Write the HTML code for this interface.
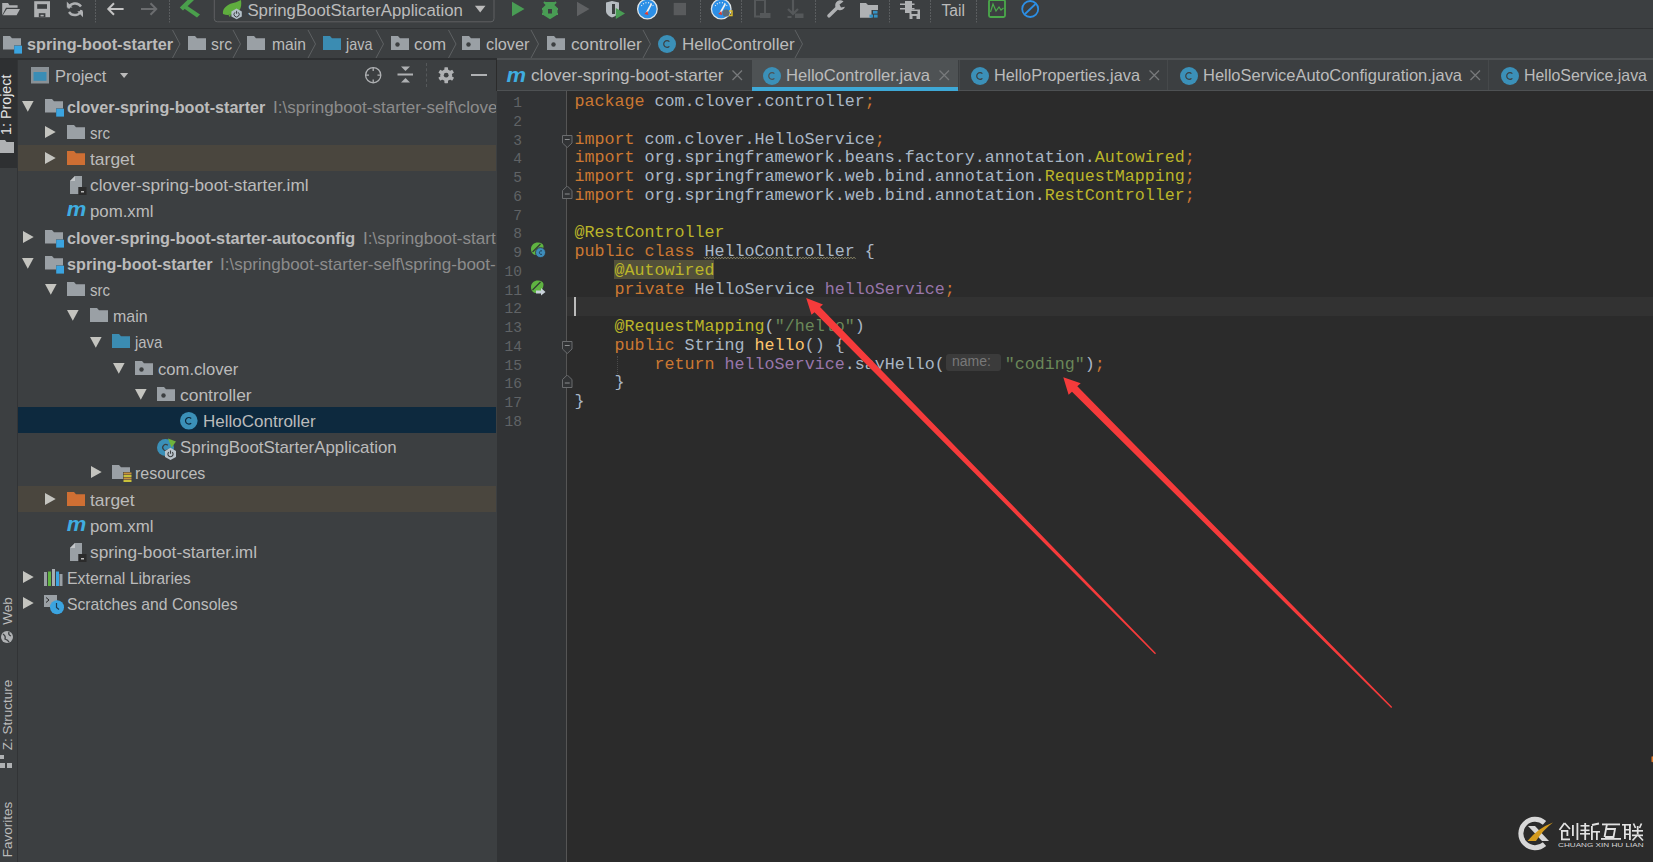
<!DOCTYPE html>
<html><head><meta charset="utf-8">
<style>
*{margin:0;padding:0;box-sizing:border-box}
html,body{width:1653px;height:862px;overflow:hidden;background:#3c3f41;font-family:"Liberation Sans",sans-serif;color:#bbbbbb}
.a{position:absolute}
#toolbar{left:0;top:0;width:1653px;height:28px;background:#3c3f41}
#tbline{left:0;top:28px;width:1653px;height:1px;background:#2f3133}
#crumbs{left:0;top:29px;width:1653px;height:29px;background:#3c3f41}
#crline{left:0;top:58px;width:497px;height:2px;background:#2d2f31}
#crline2{left:497px;top:58px;width:1156px;height:2px;background:#4e5153}
#strip{left:0;top:59px;width:17px;height:803px;background:#3c3f41}
#stripline{left:17px;top:59px;width:1px;height:803px;background:#323436}
#projbtn{left:0;top:59px;width:17px;height:109px;background:#2e3032}
#proj{left:18px;top:59px;width:478px;height:803px;background:#3c3f41;overflow:hidden}
#projline{left:496px;top:59px;width:1px;height:32px;background:#2b2b2b}
#editor{left:497px;top:59px;width:1156px;height:803px;background:#2b2b2b}
#tabs{left:497px;top:59px;width:1156px;height:31px;background:#3c3f41}
#tabline{left:497px;top:89.5px;width:1156px;height:1px;background:#4e5153}
#gutter{left:497px;top:91px;width:70px;height:771px;background:#313335}
#gutline{left:566px;top:91px;width:1px;height:771px;background:#555555}
.t{position:absolute;white-space:pre;font-size:16.5px;line-height:20px}
.code{position:absolute;left:574.5px;white-space:pre;font-family:"Liberation Mono",monospace;font-size:16.68px;line-height:18.76px;color:#a9b7c6}
.ln{position:absolute;left:497px;width:25px;text-align:right;font-family:"Liberation Mono",monospace;font-size:14.5px;line-height:18.76px;color:#606366}
.k{color:#cc7832}.an{color:#bbb529}.s{color:#6a8759}.f{color:#9876aa}.m{color:#ffc66d}
.row{position:absolute;left:18px;width:478px;height:26.2px}
.tt{position:absolute;white-space:pre;font-size:16.5px;line-height:26.2px;top:0;color:#bbbbbb}
.gp{color:#8c8c8c}
.tri{position:absolute;top:0;width:12px;height:26.2px}
.ico{position:absolute;top:4px;width:20px;height:18px}
</style></head><body>
<div id="toolbar" class="a"></div>
<div id="tbline" class="a"></div>
<div id="crumbs" class="a"></div>
<div id="strip" class="a"></div>
<div id="projbtn" class="a"></div>
<div id="stripline" class="a"></div>
<div id="proj" class="a"></div>
<div id="projline" class="a"></div>
<div class="a" style="left:0;top:0;width:496px;height:862px;overflow:hidden">
<svg class="a" style="left:22.2px;top:100.8px" width="12" height="11" viewBox="0 0 12 11" ><path d="M0 0H11.6L5.8 10.7Z" fill="#c4c4bf"/></svg>
<svg class="a" style="left:44.9px;top:98.5px" width="20" height="18" viewBox="0 0 20 18" ><path d="M0 0H7L9 2.3H18V9.5H11V13.5H0Z" fill="#9aa0a5"/><rect x="11.2" y="9.7" width="7.8" height="7.9" fill="#3ba4e0"/></svg>
<div class="tt" style="left:67.4px;top:94.5px;font-size:17px;font-weight:bold;transform:scaleX(0.9499);transform-origin:0 0">clover-spring-boot-starter</div>
<div class="tt gp" style="left:272.5px;top:94.5px;font-size:17px;transform:scaleX(1.003);transform-origin:0 0">I:\springboot-starter-self\clover-spring-boot-starter</div>
<svg class="a" style="left:45.4px;top:125.8px" width="11" height="12" viewBox="0 0 11 12" ><path d="M0 0L10.7 6L0 12Z" fill="#c4c4bf"/></svg>
<svg class="a" style="left:67.0px;top:124.7px" width="18" height="14" viewBox="0 0 18 14" ><path d="M0 0H7L9 2.2H18V14H0Z" fill="#9aa0a5"/></svg>
<div class="tt" style="left:90.0px;top:120.7px;font-size:17px;transform:scaleX(0.8846);transform-origin:0 0">src</div>
<div class="a" style="left:18px;top:145.0px;width:478px;height:26.2px;background:#4a463e"></div>
<svg class="a" style="left:45.4px;top:152.0px" width="11" height="12" viewBox="0 0 11 12" ><path d="M0 0L10.7 6L0 12Z" fill="#c4c4bf"/></svg>
<svg class="a" style="left:67.0px;top:150.9px" width="18" height="14" viewBox="0 0 18 14" ><path d="M0 0H7L9 2.2H18V14H0Z" fill="#cf6f33"/></svg>
<div class="tt" style="left:90.0px;top:146.9px;font-size:17px;transform:scaleX(1.0271);transform-origin:0 0">target</div>
<svg class="a" style="left:69.8px;top:176.0px" width="17" height="19" viewBox="0 0 17 19" ><path d="M5 0H12V11H8.5V18H0V5Z" fill="#9aa0a5"/><path d="M0 5L5 0V5Z" fill="#c3c6c9"/><rect x="8.5" y="11" width="8" height="8" fill="#2b2b2b"/><rect x="11" y="15" width="3" height="1.5" fill="#bbbbbb"/></svg>
<div class="tt" style="left:90.0px;top:173.1px;font-size:17px;transform:scaleX(1.0149);transform-origin:0 0">clover-spring-boot-starter.iml</div>
<div class="a" style="left:66.7px;top:198.4px;font-family:'Liberation Sans',sans-serif;font-style:italic;font-size:22px;line-height:22px;color:#3fade0;font-weight:bold;transform:scaleY(0.95)">m</div>
<div class="tt" style="left:90.0px;top:199.3px;font-size:17px;transform:scaleX(0.9882);transform-origin:0 0">pom.xml</div>
<svg class="a" style="left:22.8px;top:230.6px" width="11" height="12" viewBox="0 0 11 12" ><path d="M0 0L10.7 6L0 12Z" fill="#c4c4bf"/></svg>
<svg class="a" style="left:44.9px;top:229.5px" width="20" height="18" viewBox="0 0 20 18" ><path d="M0 0H7L9 2.3H18V9.5H11V13.5H0Z" fill="#9aa0a5"/><rect x="11.2" y="9.7" width="7.8" height="7.9" fill="#3ba4e0"/></svg>
<div class="tt" style="left:67.4px;top:225.5px;font-size:17px;font-weight:bold;transform:scaleX(0.9567);transform-origin:0 0">clover-spring-boot-starter-autoconfig</div>
<div class="tt gp" style="left:362.8px;top:225.5px;font-size:17px;transform:scaleX(1.003);transform-origin:0 0">I:\springboot-starter-self\clover-spring-boot-starter-autoconfig</div>
<svg class="a" style="left:22.2px;top:258.0px" width="12" height="11" viewBox="0 0 12 11" ><path d="M0 0H11.6L5.8 10.7Z" fill="#c4c4bf"/></svg>
<svg class="a" style="left:44.9px;top:255.7px" width="20" height="18" viewBox="0 0 20 18" ><path d="M0 0H7L9 2.3H18V9.5H11V13.5H0Z" fill="#9aa0a5"/><rect x="11.2" y="9.7" width="7.8" height="7.9" fill="#3ba4e0"/></svg>
<div class="tt" style="left:67.4px;top:251.7px;font-size:17px;font-weight:bold;transform:scaleX(0.9516);transform-origin:0 0">spring-boot-starter</div>
<div class="tt gp" style="left:220px;top:251.7px;font-size:17px;transform:scaleX(1.003);transform-origin:0 0">I:\springboot-starter-self\spring-boot-starter</div>
<svg class="a" style="left:44.8px;top:284.2px" width="12" height="11" viewBox="0 0 12 11" ><path d="M0 0H11.6L5.8 10.7Z" fill="#c4c4bf"/></svg>
<svg class="a" style="left:67.0px;top:281.9px" width="18" height="14" viewBox="0 0 18 14" ><path d="M0 0H7L9 2.2H18V14H0Z" fill="#9aa0a5"/></svg>
<div class="tt" style="left:90.0px;top:277.9px;font-size:17px;transform:scaleX(0.8846);transform-origin:0 0">src</div>
<svg class="a" style="left:67.4px;top:310.4px" width="12" height="11" viewBox="0 0 12 11" ><path d="M0 0H11.6L5.8 10.7Z" fill="#c4c4bf"/></svg>
<svg class="a" style="left:89.6px;top:308.1px" width="18" height="14" viewBox="0 0 18 14" ><path d="M0 0H7L9 2.2H18V14H0Z" fill="#9aa0a5"/></svg>
<div class="tt" style="left:112.6px;top:304.1px;font-size:17px;transform:scaleX(0.9379);transform-origin:0 0">main</div>
<svg class="a" style="left:90.0px;top:336.6px" width="12" height="11" viewBox="0 0 12 11" ><path d="M0 0H11.6L5.8 10.7Z" fill="#c4c4bf"/></svg>
<svg class="a" style="left:112.2px;top:334.3px" width="18" height="14" viewBox="0 0 18 14" ><path d="M0 0H7L9 2.2H18V14H0Z" fill="#3b8cb2"/></svg>
<div class="tt" style="left:135.2px;top:330.3px;font-size:17px;transform:scaleX(0.8745);transform-origin:0 0">java</div>
<svg class="a" style="left:112.6px;top:362.8px" width="12" height="11" viewBox="0 0 12 11" ><path d="M0 0H11.6L5.8 10.7Z" fill="#c4c4bf"/></svg>
<svg class="a" style="left:134.8px;top:360.5px" width="18" height="14" viewBox="0 0 18 14" ><path d="M0 0H7L9 2.2H18V14H0Z" fill="#9aa0a5"/><circle cx="6.5" cy="8.5" r="2.2" fill="#3c3f41"/></svg>
<div class="tt" style="left:157.8px;top:356.5px;font-size:17px;transform:scaleX(0.9780);transform-origin:0 0">com.clover</div>
<svg class="a" style="left:135.2px;top:389.0px" width="12" height="11" viewBox="0 0 12 11" ><path d="M0 0H11.6L5.8 10.7Z" fill="#c4c4bf"/></svg>
<svg class="a" style="left:157.4px;top:386.7px" width="18" height="14" viewBox="0 0 18 14" ><path d="M0 0H7L9 2.2H18V14H0Z" fill="#9aa0a5"/><circle cx="6.5" cy="8.5" r="2.2" fill="#3c3f41"/></svg>
<div class="tt" style="left:180.4px;top:382.7px;font-size:17px;transform:scaleX(1.0248);transform-origin:0 0">controller</div>
<div class="a" style="left:18px;top:407.0px;width:478px;height:26.2px;background:#0d293e"></div>
<svg class="a" style="left:180.2px;top:412.0px" width="17.6" height="17.6" viewBox="0 0 17.6 17.6" ><circle cx="8.8" cy="8.8" r="8.8" fill="#3b90b8"/><path d="M11.200000000000001 6.500000000000001A3.3 3.3 0 1 0 11.200000000000001 11.100000000000001" stroke="#0d293e" stroke-width="1.2" fill="none"/></svg>
<div class="tt" style="left:203.0px;top:408.9px;font-size:17px;transform:scaleX(1.0012);transform-origin:0 0">HelloController</div>
<svg class="a" style="left:157.4px;top:437.7px" width="20" height="22" viewBox="0 0 20 22" ><circle cx="8.5" cy="9.5" r="8.5" fill="#3b90b8"/><path d="M10.8 7.3A3 3 0 1 0 10.8 11.7" stroke="#3c3f41" stroke-width="1.3" fill="none"/><path d="M11 0.5L19 3.5L14.5 9.5Z" fill="#6fb33b"/><polygon points="13.5,9.8 19,12.9 19,18.9 13.5,22 8,18.9 8,12.9" fill="#b9c3ca"/><path d="M11.8 14.2A2.6 2.6 0 1 0 15.2 14.2M13.5 12.6V15.8" stroke="#3c3f41" stroke-width="1.1" fill="none"/></svg>
<div class="tt" style="left:180.4px;top:435.1px;font-size:17px;transform:scaleX(0.9928);transform-origin:0 0">SpringBootStarterApplication</div>
<svg class="a" style="left:90.6px;top:466.4px" width="11" height="12" viewBox="0 0 11 12" ><path d="M0 0L10.7 6L0 12Z" fill="#c4c4bf"/></svg>
<svg class="a" style="left:112.2px;top:464.8px" width="20" height="17" viewBox="0 0 20 17" ><path d="M0 0H7L9 2.2H18V7H11V14H0Z" fill="#9aa0a5"/><rect x="11.5" y="7.5" width="8" height="2" fill="#c8913a"/><rect x="11.5" y="10" width="8" height="2" fill="#c9c13a"/><rect x="11.5" y="12.5" width="8" height="2" fill="#c8913a"/><rect x="11.5" y="15" width="8" height="2" fill="#c9c13a"/></svg>
<div class="tt" style="left:135.2px;top:461.3px;font-size:17px;transform:scaleX(0.9420);transform-origin:0 0">resources</div>
<div class="a" style="left:18px;top:485.6px;width:478px;height:26.2px;background:#4a463e"></div>
<svg class="a" style="left:45.4px;top:492.6px" width="11" height="12" viewBox="0 0 11 12" ><path d="M0 0L10.7 6L0 12Z" fill="#c4c4bf"/></svg>
<svg class="a" style="left:67.0px;top:491.5px" width="18" height="14" viewBox="0 0 18 14" ><path d="M0 0H7L9 2.2H18V14H0Z" fill="#cf6f33"/></svg>
<div class="tt" style="left:90.0px;top:487.5px;font-size:17px;transform:scaleX(1.0271);transform-origin:0 0">target</div>
<div class="a" style="left:66.7px;top:512.8px;font-family:'Liberation Sans',sans-serif;font-style:italic;font-size:22px;line-height:22px;color:#3fade0;font-weight:bold;transform:scaleY(0.95)">m</div>
<div class="tt" style="left:90.0px;top:513.7px;font-size:17px;transform:scaleX(0.9882);transform-origin:0 0">pom.xml</div>
<svg class="a" style="left:69.8px;top:542.8px" width="17" height="19" viewBox="0 0 17 19" ><path d="M5 0H12V11H8.5V18H0V5Z" fill="#9aa0a5"/><path d="M0 5L5 0V5Z" fill="#c3c6c9"/><rect x="8.5" y="11" width="8" height="8" fill="#2b2b2b"/><rect x="11" y="15" width="3" height="1.5" fill="#bbbbbb"/></svg>
<div class="tt" style="left:90.0px;top:539.9px;font-size:17px;transform:scaleX(1.0159);transform-origin:0 0">spring-boot-starter.iml</div>
<svg class="a" style="left:22.8px;top:571.2px" width="11" height="12" viewBox="0 0 11 12" ><path d="M0 0L10.7 6L0 12Z" fill="#c4c4bf"/></svg>
<svg class="a" style="left:44.4px;top:569.2px" width="19" height="17" viewBox="0 0 19 17" ><rect x="0" y="3" width="3" height="14" fill="#9aa0a5"/><rect x="4" y="2.5" width="3" height="14.5" fill="#62b543"/><rect x="8" y="0" width="3" height="17" fill="#a8adb1"/><rect x="12" y="2.5" width="3" height="14.5" fill="#3ba4e0"/><rect x="15.5" y="5" width="3" height="12" fill="#9aa0a5"/></svg>
<div class="tt" style="left:67.4px;top:566.1px;font-size:17px;transform:scaleX(0.9353);transform-origin:0 0">External Libraries</div>
<svg class="a" style="left:22.8px;top:597.4px" width="11" height="12" viewBox="0 0 11 12" ><path d="M0 0L10.7 6L0 12Z" fill="#c4c4bf"/></svg>
<svg class="a" style="left:44.4px;top:595.4px" width="20" height="20" viewBox="0 0 20 20" ><rect x="0" y="0" width="13" height="12" fill="#9aa0a5"/><path d="M2 2.5L5 5L2 7.5" stroke="#2b2b2b" stroke-width="1" fill="none"/><circle cx="13" cy="12.3" r="7" fill="#3ba4e0"/><path d="M12.5 8V12.5L15 14.5" stroke="#1e3a50" stroke-width="1.2" fill="none"/></svg>
<div class="tt" style="left:67.4px;top:592.3px;font-size:17px;transform:scaleX(0.9258);transform-origin:0 0">Scratches and Consoles</div>
</div>
<div id="editor" class="a"></div>
<div id="tabs" class="a"></div>
<div id="tabline" class="a"></div>
<div id="crline" class="a"></div>
<div id="crline2" class="a"></div>
<div id="gutter" class="a"></div>
<div id="gutline" class="a"></div>
<svg class="a" style="left:0;top:0" width="1653" height="28" viewBox="0 0 1653 28"><line x1="95.5" y1="0" x2="95.5" y2="22.5" stroke="#5a5d5f" stroke-width="1" stroke-dasharray="2 1"/><line x1="169.5" y1="0" x2="169.5" y2="22.5" stroke="#5a5d5f" stroke-width="1" stroke-dasharray="2 1"/><line x1="700.5" y1="0" x2="700.5" y2="22.5" stroke="#5a5d5f" stroke-width="1" stroke-dasharray="2 1"/><line x1="741.5" y1="0" x2="741.5" y2="22.5" stroke="#5a5d5f" stroke-width="1" stroke-dasharray="2 1"/><line x1="815.5" y1="0" x2="815.5" y2="22.5" stroke="#5a5d5f" stroke-width="1" stroke-dasharray="2 1"/><line x1="889.5" y1="0" x2="889.5" y2="22.5" stroke="#5a5d5f" stroke-width="1" stroke-dasharray="2 1"/><line x1="930.5" y1="0" x2="930.5" y2="22.5" stroke="#5a5d5f" stroke-width="1" stroke-dasharray="2 1"/><line x1="976.5" y1="0" x2="976.5" y2="22.5" stroke="#5a5d5f" stroke-width="1" stroke-dasharray="2 1"/><path d="M2.2 3H8L9.5 5.2H17.6V7.8H6L2.2 15.3Z" fill="#afb1b3"/><path d="M6.8 9H20L16.6 15.3H2.8Z" fill="#afb1b3"/><path d="M34.2 1.2H50V17.2H34.2Z" fill="#afb1b3"/><rect x="37.2" y="4.2" width="9.8" height="4.6" fill="#3c3f41"/><rect x="38.8" y="13.2" width="6.6" height="4" fill="#3c3f41"/><rect x="40.5" y="14.8" width="3.2" height="1.6" fill="#afb1b3"/><path d="M68.5 8.5A7 7 0 0 1 81 6.5" stroke="#afb1b3" stroke-width="2.4" fill="none"/><path d="M81.5 10A7 7 0 0 1 69 12" stroke="#afb1b3" stroke-width="2.4" fill="none"/><path d="M66.8 1.5L72.5 7.5H66.8Z" fill="#afb1b3"/><path d="M83 17.2L77.3 11.2H83Z" fill="#afb1b3"/><path d="M123.6 9H108.5M114 3.3L108.3 9L114 14.7" stroke="#c4c4c4" stroke-width="2" fill="none"/><path d="M141 9H156M150.5 3.3L156.2 9L150.5 14.7" stroke="#6b6d6f" stroke-width="2" fill="none"/><path d="M179.8 7.5L190.5 -3L193.8 0.2L183 10.5Z" fill="#4a9f4c"/><path d="M185.5 4.8L200 14.6L197 17.6L183 7.8Z" fill="#4a9f4c"/><path d="M214.3 0V18.8Q214.3 21.8 217.3 21.8H491Q494 21.8 494 18.8V0" stroke="#5e6062" stroke-width="1" fill="none"/><path d="M223 14C222 8 228 3.5 236 2.2L241 0C241.6 4 241.3 8 239.3 10.3C235 14.5 228 16 223 14Z" fill="#5fae3e"/><path d="M228.5 15.5L231 14L230 17Z" fill="#5fae3e"/><polygon points="236.6,8.6 241.8,11.4 241.8,16.4 236.6,19.2 231.4,16.4 231.4,11.4" fill="#b4c0c8"/><path d="M235 12.3A2.6 2.6 0 1 0 238.2 12.3M236.6 10.8V13.8" stroke="#3c3f41" stroke-width="1" fill="none"/><path d="M474.9 5.8H485.5L480.2 12.6Z" fill="#bbbbbb"/><path d="M512 1.8L524.5 9L512 16.3Z" fill="#499c54"/><path d="M544 2L547 5H553L556 2M542 9H558M542 14H558M547 5H553L556.5 8.5V14L550 18L543.5 14V8.5Z" stroke="#499c54" stroke-width="2" fill="#499c54"/><rect x="548" y="9" width="4" height="4.5" fill="#3c3f41"/><path d="M577 1.8L589.5 9L577 16.3Z" fill="#5f6163"/><path d="M606 2.5L612 1L619 2.5V11C619 14 615 16.5 612 17.5C609 16.5 606 14 606 11Z" fill="#b7bdc2"/><rect x="612" y="4" width="3" height="10" fill="#3c3f41"/><path d="M615.8 8L625 13.5L615.8 19Z" fill="#499c54"/><circle cx="647.4" cy="9" r="9.8" fill="#2c8fe6" stroke="#dfe6ea" stroke-width="1.3"/><path d="M641.4 6A7 7 0 0 1 653.4 6" stroke="#e8eef2" stroke-width="1.2" stroke-dasharray="1 1.6" fill="none"/><path d="M646.4 13L651.4 4" stroke="#f2f2f2" stroke-width="1.6"/><path d="M644.4 14L647.4 11L648.4 15Z" fill="#e53b2c"/><circle cx="721.2" cy="9" r="9.8" fill="#2c8fe6" stroke="#dfe6ea" stroke-width="1.3"/><path d="M715.2 6A7 7 0 0 1 727.2 6" stroke="#e8eef2" stroke-width="1.2" stroke-dasharray="1 1.6" fill="none"/><path d="M720.2 13L725.2 4" stroke="#f2f2f2" stroke-width="1.6"/><path d="M718.2 14L721.2 11L722.2 15Z" fill="#e53b2c"/><circle cx="726" cy="13" r="3.6" fill="#5a6a78"/><path d="M729 11H732V15.5H729" stroke="#e1c02c" stroke-width="1.4" fill="none"/><rect x="673.7" y="2.9" width="12.3" height="12.3" fill="#595b5d"/><rect x="755" y="0" width="10" height="16.5" fill="none" stroke="#55585a" stroke-width="2"/><rect x="760" y="13" width="10.5" height="5" fill="#55585a"/><path d="M793 0V14M788 9L793 14L798 9" stroke="#55585a" stroke-width="2.2" fill="none"/><rect x="787.5" y="16" width="4" height="2" fill="#55585a"/><rect x="795" y="13.5" width="8.5" height="4.5" fill="#55585a"/><path d="M829 15.8L838 7" stroke="#afb1b3" stroke-width="3.6" stroke-linecap="round"/><path d="M843.5 1.5A5 5 0 1 0 845 6.8L841 7.5L839.5 4.5Z" fill="#afb1b3"/><path d="M860 3H866L868 5H878V10H871.5V17.8H860Z" fill="#afb1b3"/><rect x="873" y="10.8" width="4.5" height="2.8" fill="#3592c4"/><rect x="869.5" y="14.6" width="3.6" height="3" fill="#3592c4"/><rect x="874" y="14.6" width="3.6" height="3" fill="#3592c4"/><rect x="905" y="1" width="7" height="12" fill="#afb1b3"/><rect x="900" y="3.5" width="14.5" height="1.5" fill="#afb1b3"/><rect x="900" y="8" width="14.5" height="1.5" fill="#afb1b3"/><rect x="909.5" y="9.5" width="10.5" height="9.5" fill="#afb1b3"/><rect x="911.5" y="11" width="6" height="3" fill="#3c3f41"/><rect x="912.5" y="16" width="4" height="3" fill="#3c3f41"/><rect x="989" y="0" width="16" height="17" rx="1.5" fill="none" stroke="#4ba94b" stroke-width="1.8"/><path d="M990.5 12L993 4L996 11L999 7L1001 10L1003.5 8" stroke="#4ba94b" stroke-width="1.2" fill="none"/><circle cx="1030.2" cy="9" r="8" fill="none" stroke="#2c8fe6" stroke-width="1.8"/><path d="M1025 14L1035.5 4" stroke="#2c8fe6" stroke-width="1.8"/></svg>
<div class="a" style="left:247.4px;font-size:16.8px;line-height:20px;white-space:pre;color:#bbbbbb;top:0.9px">SpringBootStarterApplication</div>
<div class="a" style="left:941.5px;top:0.5px;font-size:15.6px;line-height:20px;white-space:pre;color:#bbbbbb">Tail</div>
<svg class="a" style="left:0;top:0" width="1653" height="59" viewBox="0 0 1653 59"><path d="M172.5 30L180.0 44L172.5 58" stroke="#5e6163" stroke-width="1" fill="none"/><path d="M233 30L240.5 44L233 58" stroke="#5e6163" stroke-width="1" fill="none"/><path d="M308 30L315.5 44L308 58" stroke="#5e6163" stroke-width="1" fill="none"/><path d="M376 30L383.5 44L376 58" stroke="#5e6163" stroke-width="1" fill="none"/><path d="M448.5 30L456.0 44L448.5 58" stroke="#5e6163" stroke-width="1" fill="none"/><path d="M531 30L538.5 44L531 58" stroke="#5e6163" stroke-width="1" fill="none"/><path d="M643 30L650.5 44L643 58" stroke="#5e6163" stroke-width="1" fill="none"/><path d="M795 30L802.5 44L795 58" stroke="#5e6163" stroke-width="1" fill="none"/></svg>
<svg class="a" style="left:2.8px;top:36.2px" width="20" height="18" viewBox="0 0 20 18" ><path d="M0 0H7L9 2.3H18V9.5H11V13.5H0Z" fill="#9aa0a5"/><rect x="11.2" y="9.7" width="7.8" height="7.9" fill="#3ba4e0"/></svg>
<svg class="a" style="left:187.6px;top:36.3px" width="18" height="14" viewBox="0 0 18 14" ><path d="M0 0H7L9 2.2H18V14H0Z" fill="#9aa0a5"/></svg>
<svg class="a" style="left:247.4px;top:36.3px" width="18" height="14" viewBox="0 0 18 14" ><path d="M0 0H7L9 2.2H18V14H0Z" fill="#9aa0a5"/></svg>
<svg class="a" style="left:323px;top:36.3px" width="18" height="14" viewBox="0 0 18 14" ><path d="M0 0H7L9 2.2H18V14H0Z" fill="#3b8cb2"/></svg>
<svg class="a" style="left:391px;top:36.3px" width="18" height="14" viewBox="0 0 18 14" ><path d="M0 0H7L9 2.2H18V14H0Z" fill="#9aa0a5"/><circle cx="6.5" cy="8.5" r="2.2" fill="#3c3f41"/></svg>
<svg class="a" style="left:461.5px;top:36.3px" width="18" height="14" viewBox="0 0 18 14" ><path d="M0 0H7L9 2.2H18V14H0Z" fill="#9aa0a5"/><circle cx="6.5" cy="8.5" r="2.2" fill="#3c3f41"/></svg>
<svg class="a" style="left:547px;top:36.3px" width="18" height="14" viewBox="0 0 18 14" ><path d="M0 0H7L9 2.2H18V14H0Z" fill="#9aa0a5"/><circle cx="6.5" cy="8.5" r="2.2" fill="#3c3f41"/></svg>
<svg class="a" style="left:658px;top:35.2px" width="18" height="18" viewBox="0 0 18 18" ><circle cx="9.0" cy="9.0" r="9.0" fill="#3b90b8"/><path d="M11.4 6.7A3.3 3.3 0 1 0 11.4 11.3" stroke="#3c3f41" stroke-width="1.2" fill="none"/></svg>
<div class="t" style="left:26.5px;top:33.5px;font-weight:bold;transform:scaleX(0.9832);transform-origin:0 0">spring-boot-starter</div>
<div class="t" style="left:211px;top:33.5px;transform:scaleX(0.9569);transform-origin:0 0">src</div>
<div class="t" style="left:271.6px;top:33.5px;transform:scaleX(0.9468);transform-origin:0 0">main</div>
<div class="t" style="left:346px;top:33.5px;transform:scaleX(0.8751);transform-origin:0 0">java</div>
<div class="t" style="left:414px;top:33.5px;transform:scaleX(1.0261);transform-origin:0 0">com</div>
<div class="t" style="left:485.5px;top:33.5px;transform:scaleX(0.9874);transform-origin:0 0">clover</div>
<div class="t" style="left:570.8px;top:33.5px;transform:scaleX(1.0440);transform-origin:0 0">controller</div>
<div class="t" style="left:681.5px;top:33.5px;transform:scaleX(1.0315);transform-origin:0 0">HelloController</div>
<div class="a" style="left:-24px;top:96.5px;width:60px;height:16px;transform:rotate(-90deg);font-size:14.3px;line-height:16px;white-space:pre;color:#e6e6e6;text-align:center">1: Project</div>
<svg class="a" style="left:0px;top:140px" width="14" height="13" viewBox="0 0 14 13" ><path d="M0 0H5L6.5 2H14V13H0Z" fill="#afb1b3"/></svg>
<div class="a" style="left:-12px;top:603px;width:40px;height:16px;transform:rotate(-90deg);font-size:13.5px;line-height:16px;white-space:pre;color:#bbbbbb;text-align:center">Web</div>
<svg class="a" style="left:0px;top:630px" width="14" height="14" viewBox="0 0 14 14" ><circle cx="7" cy="7" r="6" fill="#afb1b3"/><path d="M3 4Q6 6 5 9Q8 10 9 12M9 2Q8 5 11 6" stroke="#3c3f41" stroke-width="1.3" fill="none"/></svg>
<div class="a" style="left:-35px;top:707px;width:86px;height:16px;transform:rotate(-90deg);font-size:13.5px;line-height:16px;white-space:pre;color:#bbbbbb;text-align:center">Z: Structure</div>
<svg class="a" style="left:0px;top:755px" width="14" height="14" viewBox="0 0 14 14" ><rect x="0" y="0" width="4" height="4" fill="#afb1b3"/><rect x="0" y="8" width="5" height="5" fill="#afb1b3"/><rect x="7" y="8" width="5" height="5" fill="#afb1b3"/></svg>
<div class="a" style="left:-29px;top:829px;width:74px;height:16px;transform:rotate(-90deg);font-size:13.5px;line-height:16px;white-space:pre;color:#bbbbbb;text-align:center">2: Favorites</div>
<svg class="a" style="left:31px;top:67.3px" width="18" height="17" viewBox="0 0 18 17" ><rect x="0" y="0" width="18" height="16.5" fill="#8a9196"/><rect x="2.5" y="5" width="13" height="8.8" fill="#3a8db5"/></svg>
<div class="t" style="left:55px;top:65.5px">Project</div>
<svg class="a" style="left:119.8px;top:73px" width="9" height="6" viewBox="0 0 9 6" ><path d="M0 0H8.2L4.1 5Z" fill="#bbbbbb"/></svg>
<svg class="a" style="left:364px;top:66px" width="19" height="19" viewBox="0 0 19 19" ><circle cx="9.2" cy="9.2" r="7.6" fill="none" stroke="#afb1b3" stroke-width="1.3"/><path d="M9.2 1.5V5M9.2 13.5V17M1.5 9.2H5M13.5 9.2H17" stroke="#afb1b3" stroke-width="1.3"/></svg>
<svg class="a" style="left:397px;top:66px" width="17" height="18" viewBox="0 0 17 18" ><path d="M4 0.5H13L8.5 5Z" fill="#afb1b3"/><rect x="0.5" y="7.5" width="15.5" height="2" fill="#afb1b3"/><path d="M4 16.5H13L8.5 12Z" fill="#afb1b3"/></svg>
<div class="a" style="left:425.5px;top:63px;width:1px;height:24px;border-left:1px dashed #55585a"></div>
<svg class="a" style="left:437.5px;top:66.5px" width="17" height="17" viewBox="0 0 17 17" ><circle cx="8.2" cy="8.2" r="5.9" fill="#afb1b3"/><rect x="6.4" y="0.2" width="3.6" height="4" rx="0.6" fill="#afb1b3" transform="rotate(0 8.2 8.2)"/><rect x="6.4" y="0.2" width="3.6" height="4" rx="0.6" fill="#afb1b3" transform="rotate(60 8.2 8.2)"/><rect x="6.4" y="0.2" width="3.6" height="4" rx="0.6" fill="#afb1b3" transform="rotate(120 8.2 8.2)"/><rect x="6.4" y="0.2" width="3.6" height="4" rx="0.6" fill="#afb1b3" transform="rotate(180 8.2 8.2)"/><rect x="6.4" y="0.2" width="3.6" height="4" rx="0.6" fill="#afb1b3" transform="rotate(240 8.2 8.2)"/><rect x="6.4" y="0.2" width="3.6" height="4" rx="0.6" fill="#afb1b3" transform="rotate(300 8.2 8.2)"/><circle cx="8.2" cy="8.2" r="2.4" fill="#3c3f41"/></svg>
<div class="a" style="left:471px;top:74px;width:16px;height:2px;background:#afb1b3"></div>
<div class="a" style="left:751.5px;top:59.5px;width:206.5px;height:31px;background:#4e5254"></div>
<div class="a" style="left:751.5px;top:86.8px;width:206.5px;height:4px;background:#3ea8d6"></div>
<div class="a" style="left:958.5px;top:60px;width:1px;height:29.5px;background:#46494b"></div>
<div class="a" style="left:1167px;top:60px;width:1px;height:29.5px;background:#46494b"></div>
<div class="a" style="left:1488px;top:60px;width:1px;height:29.5px;background:#46494b"></div>
<div class="a" style="left:506.5px;top:63.5px;font-family:'Liberation Sans',sans-serif;font-style:italic;font-size:22px;line-height:22px;color:#3fade0;font-weight:bold;transform:scaleY(0.95)">m</div>
<svg class="a" style="left:763px;top:67px" width="18" height="18" viewBox="0 0 18 18" ><circle cx="9.0" cy="9.0" r="9.0" fill="#3b90b8"/><path d="M11.4 6.7A3.3 3.3 0 1 0 11.4 11.3" stroke="#4e5254" stroke-width="1.2" fill="none"/></svg>
<svg class="a" style="left:971px;top:67px" width="18" height="18" viewBox="0 0 18 18" ><circle cx="9.0" cy="9.0" r="9.0" fill="#3b90b8"/><path d="M11.4 6.7A3.3 3.3 0 1 0 11.4 11.3" stroke="#3c3f41" stroke-width="1.2" fill="none"/></svg>
<svg class="a" style="left:1180px;top:67px" width="18" height="18" viewBox="0 0 18 18" ><circle cx="9.0" cy="9.0" r="9.0" fill="#3b90b8"/><path d="M11.4 6.7A3.3 3.3 0 1 0 11.4 11.3" stroke="#3c3f41" stroke-width="1.2" fill="none"/></svg>
<svg class="a" style="left:1501px;top:67px" width="18" height="18" viewBox="0 0 18 18" ><circle cx="9.0" cy="9.0" r="9.0" fill="#3b90b8"/><path d="M11.4 6.7A3.3 3.3 0 1 0 11.4 11.3" stroke="#3c3f41" stroke-width="1.2" fill="none"/></svg>
<div class="t" style="left:531px;top:65px;transform:scaleX(1.0450);transform-origin:0 0">clover-spring-boot-starter</div>
<div class="t" style="left:786px;top:65px;transform:scaleX(1.0066);transform-origin:0 0">HelloController.java</div>
<div class="t" style="left:994px;top:65px;transform:scaleX(0.9887);transform-origin:0 0">HelloProperties.java</div>
<div class="t" style="left:1202.7px;top:65px;transform:scaleX(0.9979);transform-origin:0 0">HelloServiceAutoConfiguration.java</div>
<div class="t" style="left:1524px;top:65px;transform:scaleX(0.9644);transform-origin:0 0">HelloService.java</div>
<svg class="a" style="left:732px;top:70px" width="11" height="11" viewBox="0 0 11 11" ><path d="M0.5 0.5L10 10M10 0.5L0.5 10" stroke="#77797b" stroke-width="1.3"/></svg>
<svg class="a" style="left:939px;top:70px" width="11" height="11" viewBox="0 0 11 11" ><path d="M0.5 0.5L10 10M10 0.5L0.5 10" stroke="#77797b" stroke-width="1.3"/></svg>
<svg class="a" style="left:1148.5px;top:70px" width="11" height="11" viewBox="0 0 11 11" ><path d="M0.5 0.5L10 10M10 0.5L0.5 10" stroke="#77797b" stroke-width="1.3"/></svg>
<svg class="a" style="left:1469.7px;top:70px" width="11" height="11" viewBox="0 0 11 11" ><path d="M0.5 0.5L10 10M10 0.5L0.5 10" stroke="#77797b" stroke-width="1.3"/></svg>
<div id="curline" class="a" style="left:567px;top:297px;width:1086px;height:18.76px;background:#323232"></div>
<div class="a" style="left:614px;top:260px;width:100px;height:19px;background:#52503a"></div>
<svg class="a" style="left:0;top:0" width="1653" height="300" viewBox="0 0 1653 300"><polyline points="704.0,257.2 705.5,258.8 707.0,257.2 708.5,258.8 710.0,257.2 711.5,258.8 713.0,257.2 714.5,258.8 716.0,257.2 717.5,258.8 719.0,257.2 720.5,258.8 722.0,257.2 723.5,258.8 725.0,257.2 726.5,258.8 728.0,257.2 729.5,258.8 731.0,257.2 732.5,258.8 734.0,257.2 735.5,258.8 737.0,257.2 738.5,258.8 740.0,257.2 741.5,258.8 743.0,257.2 744.5,258.8 746.0,257.2 747.5,258.8 749.0,257.2 750.5,258.8 752.0,257.2 753.5,258.8 755.0,257.2 756.5,258.8 758.0,257.2 759.5,258.8 761.0,257.2 762.5,258.8 764.0,257.2 765.5,258.8 767.0,257.2 768.5,258.8 770.0,257.2 771.5,258.8 773.0,257.2 774.5,258.8 776.0,257.2 777.5,258.8 779.0,257.2 780.5,258.8 782.0,257.2 783.5,258.8 785.0,257.2 786.5,258.8 788.0,257.2 789.5,258.8 791.0,257.2 792.5,258.8 794.0,257.2 795.5,258.8 797.0,257.2 798.5,258.8 800.0,257.2 801.5,258.8 803.0,257.2 804.5,258.8 806.0,257.2 807.5,258.8 809.0,257.2 810.5,258.8 812.0,257.2 813.5,258.8 815.0,257.2 816.5,258.8 818.0,257.2 819.5,258.8 821.0,257.2 822.5,258.8 824.0,257.2 825.5,258.8 827.0,257.2 828.5,258.8 830.0,257.2 831.5,258.8 833.0,257.2 834.5,258.8 836.0,257.2 837.5,258.8 839.0,257.2 840.5,258.8 842.0,257.2 843.5,258.8 845.0,257.2 846.5,258.8 848.0,257.2 849.5,258.8 851.0,257.2 852.5,258.8 854.0,257.2 855.5,258.8" fill="none" stroke="#9a9570" stroke-width="0.9"/></svg>
<div class="code" id="code" style="top:93px"><span class="k">package</span> com.clover.controller<span class="k">;</span>

<span class="k">import</span> com.clover.HelloService<span class="k">;</span>
<span class="k">import</span> org.springframework.beans.factory.annotation.<span class="an">Autowired</span><span class="k">;</span>
<span class="k">import</span> org.springframework.web.bind.annotation.<span class="an">RequestMapping</span><span class="k">;</span>
<span class="k">import</span> org.springframework.web.bind.annotation.<span class="an">RestController</span><span class="k">;</span>

<span class="an">@RestController</span>
<span class="k">public class</span> HelloController {
    <span class="an">@Autowired</span>
    <span class="k">private</span> HelloService <span class="f">helloService</span><span class="k">;</span>

    <span class="an">@RequestMapping</span>(<span class="s">"/hello"</span>)
    <span class="k">public</span> String <span class="m">hello</span>() {
        <span class="k">return</span> <span class="f">helloService</span>.sayHello(      <span class="s">"coding"</span>)<span class="k">;</span>
    }
}
</div>
<div class="a" style="left:945.5px;top:354px;width:55.5px;height:17px;background:#3b3b3b;border-radius:3px"></div>
<div class="a" style="left:952px;top:352px;font-size:14px;line-height:19px;color:#787878;white-space:pre">name:</div>
<div class="a" style="left:574px;top:297px;width:2px;height:19px;background:#bbbbbb"></div>
<div class="ln" style="top:94.00px">1</div>
<div class="ln" style="top:112.76px">2</div>
<div class="ln" style="top:131.52px">3</div>
<div class="ln" style="top:150.28px">4</div>
<div class="ln" style="top:169.04px">5</div>
<div class="ln" style="top:187.80px">6</div>
<div class="ln" style="top:206.56px">7</div>
<div class="ln" style="top:225.32px">8</div>
<div class="ln" style="top:244.08px">9</div>
<div class="ln" style="top:262.84px">10</div>
<div class="ln" style="top:281.60px">11</div>
<div class="ln" style="top:300.36px">12</div>
<div class="ln" style="top:319.12px">13</div>
<div class="ln" style="top:337.88px">14</div>
<div class="ln" style="top:356.64px">15</div>
<div class="ln" style="top:375.40px">16</div>
<div class="ln" style="top:394.16px">17</div>
<div class="ln" style="top:412.92px">18</div>
<svg class="a" style="left:530px;top:242px" width="17" height="16" viewBox="0 0 17 16" ><path d="M1 7C1 3 4 0.5 8 0.5C11 0.5 13 2 13.5 4C13.5 9 10.5 13 6 13C3 13 1 10.5 1 7Z" fill="#5fb341"/><path d="M2.5 10L10.5 2" stroke="#313335" stroke-width="1.1"/><circle cx="10.5" cy="10.6" r="5" fill="#3e8dbb" stroke="#313335" stroke-width="0.8"/><path d="M12 9A1.8 1.8 0 1 0 12 12.2" stroke="#1e3a50" stroke-width="1" fill="none"/></svg>
<svg class="a" style="left:530px;top:280px" width="17" height="16" viewBox="0 0 17 16" ><path d="M1 7C1 3 4 0.5 8 0.5C11 0.5 13 2 13.5 4C13.5 9 10.5 13 6 13C3 13 1 10.5 1 7Z" fill="#5fb341"/><path d="M2.5 10L10.5 2" stroke="#313335" stroke-width="1.1"/><path d="M6 10.5H11V8L15.5 12L11 15.5V13.5H6Z" fill="#c9d3da"/></svg>
<svg class="a" style="left:561.5px;top:134.5px" width="11" height="13" viewBox="0 0 11 13" ><path d="M0.5 0.5H10V8L5.25 12.5L0.5 8Z" fill="#313335" stroke="#6b6d6f" stroke-width="1"/><path d="M2.8 4.5H7.7" stroke="#8b8d8f" stroke-width="1"/></svg>
<svg class="a" style="left:561.5px;top:185.5px" width="11" height="13" viewBox="0 0 11 13" ><path d="M0.5 12.5H10V4.5L5.25 0L0.5 4.5Z" fill="#313335" stroke="#6b6d6f" stroke-width="1"/><path d="M2.8 8H7.7" stroke="#8b8d8f" stroke-width="1"/></svg>
<svg class="a" style="left:561.5px;top:340.5px" width="11" height="13" viewBox="0 0 11 13" ><path d="M0.5 0.5H10V8L5.25 12.5L0.5 8Z" fill="#313335" stroke="#6b6d6f" stroke-width="1"/><path d="M2.8 4.5H7.7" stroke="#8b8d8f" stroke-width="1"/></svg>
<svg class="a" style="left:561.5px;top:374.5px" width="11" height="13" viewBox="0 0 11 13" ><path d="M0.5 12.5H10V4.5L5.25 0L0.5 4.5Z" fill="#313335" stroke="#6b6d6f" stroke-width="1"/><path d="M2.8 8H7.7" stroke="#8b8d8f" stroke-width="1"/></svg>
<div class="a" style="left:616.5px;top:356px;width:0;height:18px;border-left:1px dotted #4a4a4a"></div>
<svg class="a" style="left:0;top:0" width="1653" height="862" viewBox="0 0 1653 862"><polygon points="806.2,298.0 823.0,304.4 820.0,306.9 1156.0,653.2 1155.0,654.2 814.5,312.3 811.5,314.8" fill="#f53b3b"/><polygon points="1063.3,377.2 1080.7,383.2 1077.3,386.3 1392.2,707.0 1391.2,708.0 1072.0,391.7 1068.6,394.8" fill="#f53b3b"/><rect x="1651.5" y="756.2" width="1.5" height="6" rx="0.7" fill="#e07a2a"/></svg>
<svg class="a" style="left:0;top:0" width="1653" height="862" viewBox="0 0 1653 862"><path d="M1544.5 822.9A14.2 14.2 0 1 0 1544.5 844.1" stroke="#d7d7d7" stroke-width="5" fill="none"/><path d="M1528 826L1535 826L1549 841L1542 841Z" fill="#d7d7d7"/><path d="M1527.5 841Q1538 828 1553 822.5Q1543 830 1536 841Z" fill="#d49b1e"/><path d="M1564.5 823L1559.5 830M1564.5 823L1570 829" stroke="#e1e1e1" stroke-width="1.8" fill="none"/><rect x="1561" y="830" width="1.8" height="10" fill="#e1e1e1"/><rect x="1561" y="830" width="7" height="1.8" fill="#e1e1e1"/><rect x="1566.5" y="830" width="1.8" height="6" fill="#e1e1e1"/><rect x="1561" y="838.5" width="9" height="1.8" fill="#e1e1e1"/><rect x="1572" y="825" width="1.8" height="11" fill="#e1e1e1"/><rect x="1576.5" y="823" width="1.8" height="17" fill="#e1e1e1"/><rect x="1580.5" y="825" width="9" height="1.6" fill="#e1e1e1"/><rect x="1580.5" y="829.5" width="9" height="1.6" fill="#e1e1e1"/><rect x="1580" y="833" width="10" height="1.6" fill="#e1e1e1"/><rect x="1584.3" y="823" width="1.8" height="17" fill="#e1e1e1"/><rect x="1591" y="826" width="1.8" height="14" fill="#e1e1e1"/><rect x="1591" y="831" width="9" height="1.6" fill="#e1e1e1"/><rect x="1596" y="831" width="1.8" height="9" fill="#e1e1e1"/><path d="M1592 825L1599 823.5" stroke="#e1e1e1" stroke-width="1.8"/><rect x="1602" y="823.5" width="18" height="1.8" fill="#e1e1e1"/><rect x="1601" y="838" width="20" height="1.8" fill="#e1e1e1"/><path d="M1607 824L1604.5 837M1606 829H1615L1613.5 837H1605" stroke="#e1e1e1" stroke-width="1.8" fill="none"/><rect x="1622" y="824" width="9" height="1.6" fill="#e1e1e1"/><rect x="1624" y="824" width="1.8" height="15" fill="#e1e1e1"/><rect x="1629" y="824" width="1.8" height="16" fill="#e1e1e1"/><rect x="1624" y="829" width="5" height="1.5" fill="#e1e1e1"/><rect x="1624" y="833.5" width="5" height="1.5" fill="#e1e1e1"/><rect x="1632" y="830" width="11" height="1.7" fill="#e1e1e1"/><rect x="1632" y="834.5" width="11" height="1.7" fill="#e1e1e1"/><rect x="1636.8" y="826" width="1.8" height="8.5" fill="#e1e1e1"/><path d="M1633.5 823.5L1635.5 828M1641.5 823.5L1639.5 828M1637.5 835L1632.5 840.5M1638 835L1643 840.5" stroke="#e1e1e1" stroke-width="1.7" fill="none"/></svg>
<div class="a" style="left:1558.3px;top:841.6px;font-size:5.8px;line-height:6px;white-space:pre;color:#d8d8d8;transform:scaleX(1.405);transform-origin:0 0">CHUANG XIN HU LIAN</div>
</body></html>
